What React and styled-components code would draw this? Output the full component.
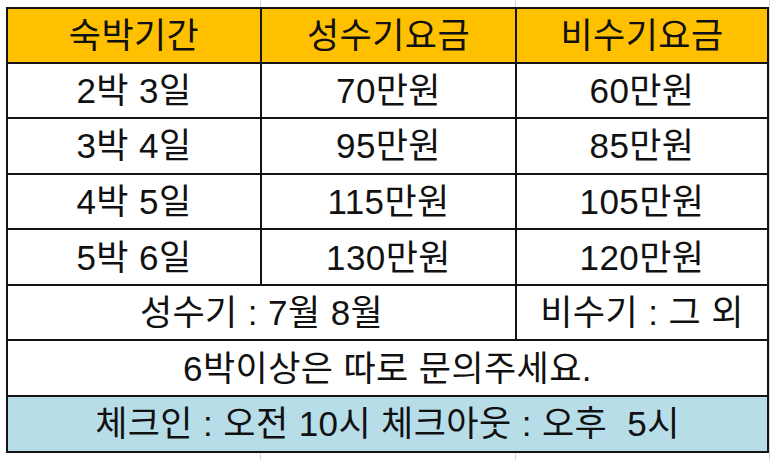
import React from "react";
import styled, { createGlobalStyle } from "styled-components";

const GlobalStyle = createGlobalStyle`
  html, body {
    margin: 0;
    padding: 0;
    background: #ffffff;
  }
`;

const Sheet = styled.div`
  width: 773px;
  height: 460px;
  box-sizing: border-box;
  padding: 7px 0 0 6px;
  overflow: hidden;
  background-color: #ffffff;
  background-image:
    linear-gradient(to right, transparent 260px, #d6d6d6 260px, #d6d6d6 261px, transparent 261px),
    linear-gradient(to right, transparent 515px, #d6d6d6 515px, #d6d6d6 516px, transparent 516px),
    linear-gradient(to right, transparent 769px, #d6d6d6 769px, #d6d6d6 770px, transparent 770px);
`;

const Table = styled.table`
  border-collapse: collapse;
  table-layout: fixed;
  width: 761px;
  font-family: "Liberation Sans", "Noto Sans CJK KR", sans-serif;
  font-size: 35px;
  letter-spacing: 0.4px;
  color: #111;
`;

const Row = styled.tr`
  height: ${(p) => (p.$head ? "54.5px" : "55.6px")};
`;

const Cell = styled.td`
  border: 2px solid #141414;
  background: ${(p) => p.$bg || "#ffffff"};
  text-align: center;
  vertical-align: middle;
  padding: 0;
  line-height: 1;
  white-space: pre;
`;

const prices = [
  ["2박 3일", "70만원", "60만원"],
  ["3박 4일", "95만원", "85만원"],
  ["4박 5일", "115만원", "105만원"],
  ["5박 6일", "130만원", "120만원"],
];

export default function App() {
  return (
    <>
      <GlobalStyle />
      <Sheet>
        <Table>
          <colgroup>
            <col style={{ width: 254 }} />
            <col style={{ width: 255 }} />
            <col style={{ width: 252 }} />
          </colgroup>
          <tbody>
            <Row $head>
              <Cell $bg="#ffc000">숙박기간</Cell>
              <Cell $bg="#ffc000">성수기요금</Cell>
              <Cell $bg="#ffc000">비수기요금</Cell>
            </Row>
            {prices.map((r) => (
              <Row key={r[0]}>
                <Cell>{r[0]}</Cell>
                <Cell>{r[1]}</Cell>
                <Cell>{r[2]}</Cell>
              </Row>
            ))}
            <Row>
              <Cell colSpan={2}>성수기 : 7월 8월</Cell>
              <Cell>비수기 : 그 외</Cell>
            </Row>
            <Row>
              <Cell colSpan={3}>6박이상은 따로 문의주세요.</Cell>
            </Row>
            <Row>
              <Cell colSpan={3} $bg="#b7dde8">체크인 : 오전 10시 체크아웃 : 오후  5시</Cell>
            </Row>
          </tbody>
        </Table>
      </Sheet>
    </>
  );
}
